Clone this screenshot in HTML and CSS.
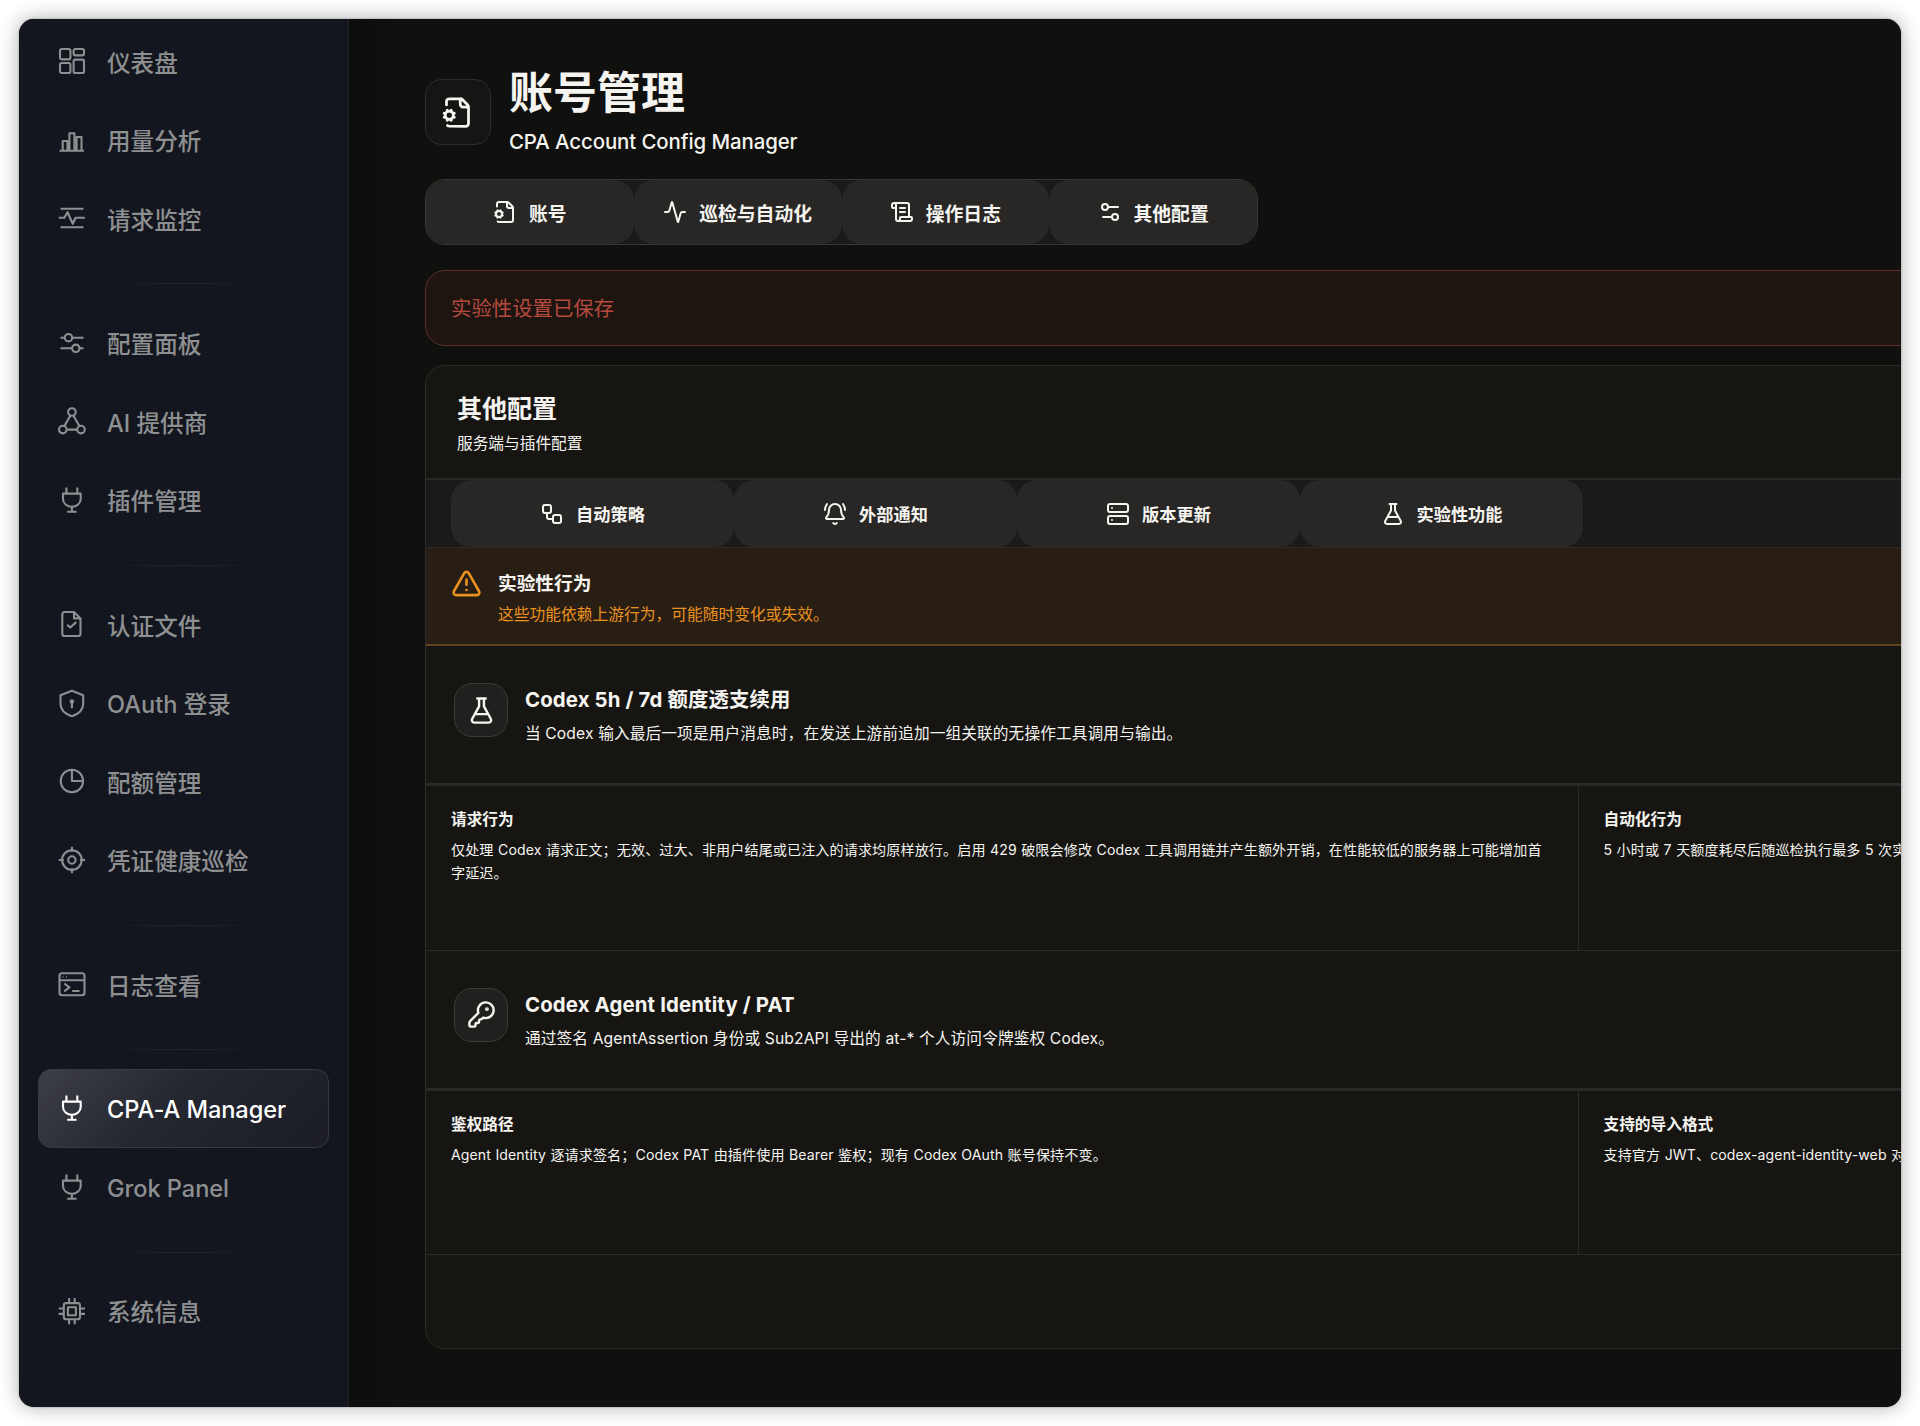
FILE: index.html
```html
<!DOCTYPE html>
<html lang="zh-CN">
  <head>
    <meta charset="utf-8" />
    <title>CPA Account Config Manager</title>
    <link rel="stylesheet" href="styles.css">
  </head>
  <body>
    <!-- icon sprite -->
    <svg class="sprite" width="0" height="0">
      <symbol id="n-dashboard" viewBox="0 0 28 28"><rect x="2" y="2" width="10.4" height="10.4" rx="1.8"/><rect x="15.6" y="2" width="10.4" height="6.4" rx="1.8"/><rect x="2" y="16" width="10.4" height="10" rx="1.8"/><rect x="15.6" y="12.6" width="10.4" height="13.4" rx="1.8"/></symbol>
      <symbol id="n-chart" viewBox="0 0 28 28"><path d="M1.5 24.7H26M4.7 24.7V15h4.8v9.7M11.4 24.7V7.3h5v17.4M18.6 24.7V11h4.9v13.7"/></symbol>
      <symbol id="n-pulse" viewBox="0 0 28 28"><path d="M2.5 4.8h23M2.5 23.2h23M.8 13.8h5.5l3.2-5.6 5.3 11.6 2.7-6h9.3"/></symbol>
      <symbol id="n-sliders" viewBox="0 0 28 28"><path d="M2.5 8.7h4.4M14.1 8.7h11.4M2.5 19.3h11.7M21.4 19.3h4.1"/><circle cx="10.5" cy="8.7" r="3.7"/><circle cx="17.8" cy="19.3" r="3.7"/></symbol>
      <symbol id="n-nodes" viewBox="0 0 28 28"><circle cx="13.9" cy="5" r="3.8"/><circle cx="4.8" cy="22.6" r="3.8"/><circle cx="23" cy="22.6" r="3.8"/><path d="M12.3 8.7 6.4 19M15.5 8.7 21.4 19M8.8 22.6h10.2"/></symbol>
      <symbol id="n-plug" viewBox="0 0 28 28"><path d="M8.4 1.5v6M19.3 1.5v6M5 7.6h17.7V13a8.8 7.8 0 0 1-17.7 0zM13.9 20.8v5M9.2 25.8h9.4"/></symbol>
      <symbol id="n-file" viewBox="0 0 28 28"><path d="M16 2H6.6a2.3 2.3 0 0 0-2.3 2.3v19.4A2.3 2.3 0 0 0 6.6 26h13.6a2.3 2.3 0 0 0 2.3-2.3V8.4zM16 2v6.4h6.5M9.2 14.7l3 2.8 6-5.4"/></symbol>
      <symbol id="n-shield" viewBox="0 0 28 28"><path d="M13.9 1.8 25.2 6.2v8.6c0 6-5 10.3-11.3 12.5C7.5 25.1 2.5 20.8 2.5 14.8V6.2zM13.9 13v6.3"/><circle cx="13.9" cy="12.6" r="1.2"/></symbol>
      <symbol id="n-pie" viewBox="0 0 28 28"><circle cx="13.9" cy="14" r="11.2"/><path d="M13.9 2.8V14h11.2"/></symbol>
      <symbol id="n-target" viewBox="0 0 28 28"><circle cx="13.9" cy="14" r="9.8"/><circle cx="13.9" cy="14" r="3.7"/><path d="M13.9.8v5M13.9 22.2v5M.7 14h5M22.1 14h5"/></symbol>
      <symbol id="n-terminal" viewBox="0 0 28 28"><rect x="1.5" y="3.3" width="25" height="21.9" rx="2.5"/><path d="M1.5 10.3h25M6.2 13.5l5.2 3.9-5.2 3.9M14.2 21h7.3M4.5 6.7h.8M7.9 6.7h.8"/></symbol>
      <symbol id="n-chip" viewBox="0 0 28 28"><rect x="5.8" y="6.1" width="16.2" height="16.2" rx="2.3"/><rect x="9.9" y="10.2" width="8" height="8"/><path d="M11.1 1v5M16.7 1v5M11.1 22.3v5M16.7 22.3v5M.7 11.5h5M.7 16.9h5M22 11.5h5M22 16.9h5"/></symbol>

      <symbol id="i-file-cog" viewBox="0 0 24 24"><path d="M14 2v4a2 2 0 0 0 2 2h4M4.677 21.5a2 2 0 0 0 1.313.5H18a2 2 0 0 0 2-2V8a2.4 2.4 0 0 0-.7-1.7l-3.6-3.6A2.4 2.4 0 0 0 14 2H6a2 2 0 0 0-2 2v2.5M3.2 12.9l-.9-.4M3.2 15.1l-.9.4M4.9 11.2l-.4-.9M4.9 16.8l-.4.9M7.5 10.3l-.4.9M7.5 17.7l-.4-.9M9.7 12.5l-.9.4M9.7 15.5l-.9-.4"/><circle cx="6" cy="14" r="3"/></symbol>
      <symbol id="i-activity" viewBox="0 0 24 24"><path d="M22 12h-2.48a2 2 0 0 0-1.93 1.46l-2.35 8.36a.25.25 0 0 1-.48 0L9.24 2.18a.25.25 0 0 0-.48 0l-2.35 8.36A2 2 0 0 1 4.49 12H2"/></symbol>
      <symbol id="i-scroll" viewBox="0 0 24 24"><path d="M15 12h-5M15 8h-5M19 17V5a2 2 0 0 0-2-2H4M8 21h12a2 2 0 0 0 2-2v-1a1 1 0 0 0-1-1H11a1 1 0 0 0-1 1v1a2 2 0 1 1-4 0V5a2 2 0 1 0-4 0v2a1 1 0 0 0 1 1h3"/></symbol>
      <symbol id="i-settings" viewBox="0 0 24 24"><path d="M20 7h-9M14 17H5"/><circle cx="17" cy="17" r="3"/><circle cx="7" cy="7" r="3"/></symbol>
      <symbol id="i-workflow" viewBox="0 0 24 24"><rect width="8" height="8" x="3" y="3" rx="2"/><path d="M7 11v4a2 2 0 0 0 2 2h4"/><rect width="8" height="8" x="13" y="13" rx="2"/></symbol>
      <symbol id="i-bell" viewBox="0 0 24 24"><path d="M10.268 21a2 2 0 0 0 3.464 0M22 8c0-2.3-.8-4.3-2-6M3.262 15.326A1 1 0 0 0 4 17h16a1 1 0 0 0 .74-1.673C19.41 13.956 18 12.499 18 8A6 6 0 0 0 6 8c0 4.499-1.411 5.956-2.738 7.326M4 2C2.8 3.7 2 5.7 2 8"/></symbol>
      <symbol id="i-server" viewBox="0 0 24 24"><rect width="20" height="8" x="2" y="2" rx="2"/><rect width="20" height="8" x="2" y="14" rx="2"/><path d="M6 6h.01M6 18h.01"/></symbol>
      <symbol id="i-flask" viewBox="0 0 24 24"><path d="M14 2v6a2 2 0 0 0 .245.96l5.51 10.08A2 2 0 0 1 18 22H6a2 2 0 0 1-1.755-2.96l5.51-10.08A2 2 0 0 0 10 8V2M6.453 15h11.094M8.5 2h7"/></symbol>
      <symbol id="i-warning" viewBox="0 0 24 24"><path d="m21.73 18-8-14a2 2 0 0 0-3.48 0l-8 14A2 2 0 0 0 4 21h16a2 2 0 0 0 1.73-3M12 9v4M12 17h.01"/></symbol>
      <symbol id="i-key" viewBox="0 0 24 24"><path d="M2.586 17.414A2 2 0 0 0 2 18.828V21a1 1 0 0 0 1 1h3a1 1 0 0 0 1-1v-1a1 1 0 0 1 1-1h1a1 1 0 0 0 1-1v-1a1 1 0 0 1 1-1h.172a2 2 0 0 0 1.414-.586l.814-.814a6.5 6.5 0 1 0-4-4z"/><circle cx="16.5" cy="7.5" r=".6"/></symbol>
    </svg>

    <div class="window">
      <nav class="sidebar">
        <a class="nav-item"><svg><use href="#n-dashboard"/></svg><span>仪表盘</span></a>
        <a class="nav-item"><svg><use href="#n-chart"/></svg><span>用量分析</span></a>
        <a class="nav-item"><svg><use href="#n-pulse"/></svg><span>请求监控</span></a>
        <hr>
        <a class="nav-item"><svg><use href="#n-sliders"/></svg><span>配置面板</span></a>
        <a class="nav-item"><svg><use href="#n-nodes"/></svg><span>AI 提供商</span></a>
        <a class="nav-item"><svg><use href="#n-plug"/></svg><span>插件管理</span></a>
        <hr>
        <a class="nav-item"><svg><use href="#n-file"/></svg><span>认证文件</span></a>
        <a class="nav-item"><svg><use href="#n-shield"/></svg><span>OAuth 登录</span></a>
        <a class="nav-item"><svg><use href="#n-pie"/></svg><span>配额管理</span></a>
        <a class="nav-item"><svg><use href="#n-target"/></svg><span>凭证健康巡检</span></a>
        <hr>
        <a class="nav-item"><svg><use href="#n-terminal"/></svg><span>日志查看</span></a>
        <hr>
        <a class="nav-item latin active"><svg><use href="#n-plug"/></svg><span>CPA-A Manager</span></a>
        <a class="nav-item latin"><svg><use href="#n-plug"/></svg><span>Grok Panel</span></a>
        <hr>
        <a class="nav-item"><svg><use href="#n-chip"/></svg><span>系统信息</span></a>
      </nav>

      <main class="main">
        <header class="page-header">
          <div class="page-icon"><svg><use href="#i-file-cog"/></svg></div>
          <div>
            <h1>账号管理</h1>
            <p>CPA Account Config Manager</p>
          </div>
        </header>

        <div class="tabs">
          <button><svg><use href="#i-file-cog"/></svg>账号</button>
          <button><svg><use href="#i-activity"/></svg>巡检与自动化</button>
          <button><svg><use href="#i-scroll"/></svg>操作日志</button>
          <button><svg><use href="#i-settings"/></svg>其他配置</button>
        </div>

        <div class="alert">实验性设置已保存</div>

        <section class="panel">
          <div class="panel-header">
            <h2>其他配置</h2>
            <p>服务端与插件配置</p>
          </div>
          <div class="subtabs">
            <button><svg><use href="#i-workflow"/></svg>自动策略</button>
            <button><svg><use href="#i-bell"/></svg>外部通知</button>
            <button><svg><use href="#i-server"/></svg>版本更新</button>
            <button><svg><use href="#i-flask"/></svg>实验性功能</button>
          </div>
          <div class="warning">
            <svg><use href="#i-warning"/></svg>
            <div>
              <h3>实验性行为</h3>
              <p>这些功能依赖上游行为，可能随时变化或失效。</p>
            </div>
          </div>

          <article class="feature">
            <div class="feature-header">
              <div class="feature-icon"><svg><use href="#i-flask"/></svg></div>
              <div>
                <h3>Codex 5h / 7d 额度透支续用</h3>
                <p>当 Codex 输入最后一项是用户消息时，在发送上游前追加一组关联的无操作工具调用与输出。</p>
              </div>
            </div>
            <div class="feature-cells">
              <div class="cell">
                <h4>请求行为</h4>
                <p>仅处理 Codex 请求正文；无效、过大、非用户结尾或已注入的请求均原样放行。启用 429 破限会修改 Codex 工具调用链并产生额外开销，在性能较低的服务器上可能增加首字延迟。</p>
              </div>
              <div class="cell">
                <h4>自动化行为</h4>
                <p>5 小时或 7 天额度耗尽后随巡检执行最多 5 次实</p>
              </div>
            </div>
          </article>

          <article class="feature">
            <div class="feature-header">
              <div class="feature-icon"><svg><use href="#i-key"/></svg></div>
              <div>
                <h3>Codex Agent Identity / PAT</h3>
                <p>通过签名 AgentAssertion 身份或 Sub2API 导出的 at-* 个人访问令牌鉴权 Codex。</p>
              </div>
            </div>
            <div class="feature-cells">
              <div class="cell">
                <h4>鉴权路径</h4>
                <p>Agent Identity 逐请求签名；Codex PAT 由插件使用 Bearer 鉴权；现有 Codex OAuth 账号保持不变。</p>
              </div>
              <div class="cell">
                <h4>支持的导入格式</h4>
                <p>支持官方 JWT、codex-agent-identity-web 对</p>
              </div>
            </div>
          </article>
        </section>
      </main>
    </div>
  </body>
</html>
```

FILE: styles.css
```css
* {
  box-sizing: border-box;
}
body {
  margin: 0;
  padding: 19px;
  background: #fff;
  color: #f5f4f0;
  font-family: Inter, "Noto Sans CJK SC", sans-serif;
  overflow: hidden;
}
h1, h2, h3, h4, p {
  margin: 0;
}
svg {
  fill: none;
  stroke: currentColor;
  stroke-width: 2;
  stroke-linecap: round;
  stroke-linejoin: round;
  flex: none;
}
.sprite {
  position: absolute;
}
.window {
  display: flex;
  width: 1882px;
  height: 1388px;
  border-radius: 15px;
  overflow: hidden;
  background: #10100e;
  box-shadow: 0 0 2px rgba(0, 0, 0, .35), 0 0 20px rgba(0, 0, 0, .32);
}

/* sidebar */
.sidebar {
  flex: none;
  width: 330px;
  padding: 3px 19px;
  background: #13161e;
  border-right: 1px solid #202428;
}
.nav-item {
  display: flex;
  align-items: center;
  gap: 21px;
  height: 78.6px;
  padding-left: 19px;
  border: 1px solid transparent;
  border-radius: 13px;
  color: #8e8f91;
  font-size: 23.6px;
  font-weight: 500;
  white-space: nowrap;
}
.nav-item svg {
  width: 28px;
  height: 28px;
  stroke-width: 2.1;
  stroke-linecap: butt;
}
.nav-item span {
  padding-top: 1px;
}
.nav-item.latin span {
  padding-top: 3px;
  letter-spacing: -.05px;
}
.nav-item.active {
  width: 291px;
  color: #fff;
  border-color: #383a41;
  background: linear-gradient(135deg, #3d3e46 0%, #252730 45%, #1b1c25 100%);
}
.sidebar hr {
  width: 160px;
  height: 1px;
  margin: 25.6px auto 19px 66px;
  border: 0;
  background: linear-gradient(90deg, transparent, #22262b, transparent);
}

/* main column runs past the right edge of the window */
.main {
  flex: none;
  width: 2458px;
  padding: 47px 77px 0 76px;
  background: linear-gradient(90deg, #0d0d0b, #10100e 60px);
}
.page-header {
  display: flex;
  gap: 18px;
  height: 113px;
}
.page-icon {
  display: flex;
  align-items: center;
  justify-content: center;
  width: 66px;
  height: 66px;
  margin-top: 13px;
  border: 1px solid #2d2c2a;
  border-radius: 16px;
  background: #151513;
}
.page-icon svg {
  width: 33px;
  height: 33px;
  margin-right: 2px;
}
h1 {
  font-size: 44px;
  line-height: 54px;
  font-weight: 700;
}
.page-header p {
  margin-top: 7px;
  font-size: 20.4px;
  line-height: 30px;
  font-weight: 500;
  letter-spacing: -.08px;
}
button {
  display: flex;
  align-items: center;
  justify-content: center;
  padding: 0;
  border: 0;
  background: #282725;
  color: inherit;
  font: inherit;
  font-weight: 700;
}
.tabs {
  display: flex;
  width: 833px;
  height: 66px;
  border: 1px solid #393735;
  border-radius: 20px;
  background: #1b1a18;
  overflow: hidden;
}
.tabs button {
  flex: 1;
  gap: 12px;
  border-radius: 20px;
  font-size: 18.8px;
}
.tabs svg {
  width: 24px;
  height: 24px;
}
.alert {
  height: 76px;
  margin-top: 25px;
  padding-left: 25px;
  border: 1px solid #5c302c;
  border-radius: 20px;
  background: #1e1511;
  color: #b64a3e;
  font-size: 20.4px;
  line-height: 76px;
}

.panel {
  height: 984px;
  margin-top: 19px;
  border: 1px solid #2c2b29;
  border-radius: 20px;
  background: #161512;
  overflow: hidden;
}
.panel-header {
  height: 112px;
  padding: 24px 31px;
}
h2 {
  font-size: 25px;
  line-height: 38px;
}
.panel-header p {
  margin-top: 4px;
  font-size: 15.7px;
  line-height: 24px;
}
.subtabs {
  display: flex;
  height: 70px;
  padding-left: 25px;
  border-top: 2px solid #282725;
  border-bottom: 1px solid #2c2b29;
  background: #1b1a18;
}
.subtabs button {
  width: 283px;
  gap: 12px;
  border-radius: 20px;
  font-size: 17.2px;
}
.subtabs svg {
  width: 24px;
  height: 24px;
}
.warning {
  display: flex;
  height: 98px;
  gap: 16px;
  padding: 20px 25px;
  border-bottom: 2px solid #5f431f;
  background: #291e14;
}
.warning svg {
  width: 31px;
  height: 31px;
  color: #ea921f;
}
.warning h3 {
  font-size: 18.7px;
  line-height: 31px;
}
.warning p {
  font-size: 15.75px;
  line-height: 31px;
  color: #ea921f;
}

.feature {
  height: 304.7px;
  border-bottom: 1px solid #2c2b29;
}
.feature-header {
  display: flex;
  gap: 17px;
  height: 140px;
  padding: 37px 28px;
  border-bottom: 3px solid #2a2927;
}
.feature-icon {
  display: flex;
  align-items: center;
  justify-content: center;
  width: 54px;
  height: 54px;
  border: 1px solid #3c3b39;
  border-radius: 18px;
  background: #20201e;
}
.feature-icon svg {
  width: 29px;
  height: 29px;
}
.feature-header h3 {
  padding-top: 1px;
  font-size: 20.4px;
  line-height: 32px;
  letter-spacing: .13px;
}
.feature-header p {
  margin-top: 6px;
  font-size: 15.7px;
  line-height: 24px;
  letter-spacing: .1px;
}
.feature-cells {
  display: grid;
  grid-template-columns: 1fr 1fr;
  height: 163.7px;
}
.cell {
  padding: 22px 31px 22px 25px;
}
.cell + .cell {
  border-left: 1px solid #2c2b29;
}
.cell h4 {
  font-size: 15.7px;
  line-height: 24px;
}
.cell p {
  margin-top: 6px;
  font-size: 14.1px;
  line-height: 23px;
  letter-spacing: .09px;
  word-spacing: .4px;
}
```
